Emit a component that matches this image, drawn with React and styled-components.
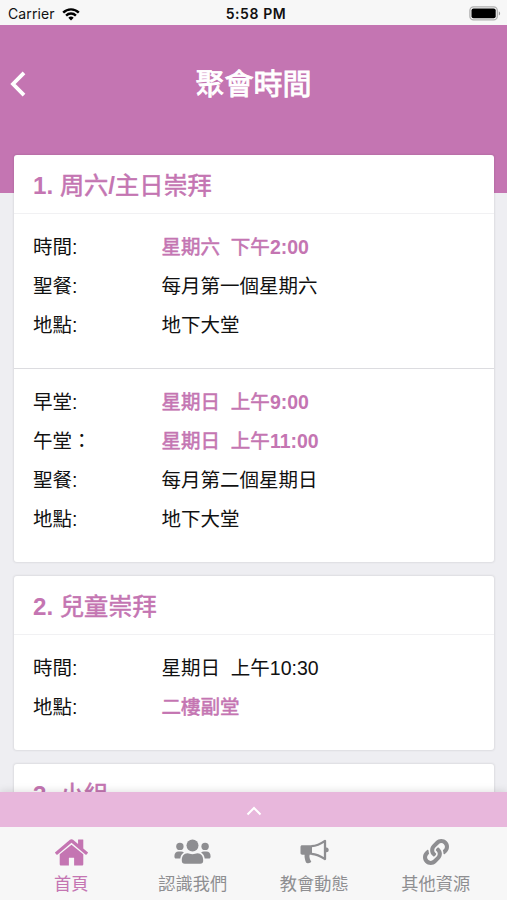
import styled, { createGlobalStyle } from 'styled-components'
import { FaLink } from 'react-icons/fa'

const GlobalStyle = createGlobalStyle`
  * {
    box-sizing: border-box;
  }
  body {
    margin: 0;
    overflow: hidden;
    background-color: #eeeef2;
    font-family: "Liberation Sans", "Noto Sans CJK TC", sans-serif;
  }
`

const Screen = styled.div`
  display: flex;
  flex-direction: column;
  height: 900px;
  overflow: hidden;
  background-color: #eeeef2;
`

const StatusBar = styled.div`
  display: grid;
  grid-template-columns: 1fr auto 1fr;
  align-items: center;
  flex-shrink: 0;
  height: 25px;
  padding: 3px 6px 0 8px;
  background-color: #f7f7f7;
  color: #111;
  font-family: Inter, "Liberation Sans", sans-serif;
  font-size: 14px;
  line-height: 22px;
`

const Carrier = styled.div`
  display: flex;
  align-items: center;
  gap: 7px;
  letter-spacing: 0.1px;
`

const Clock = styled.div`
  padding-left: 3px;
  font-weight: 600;
  letter-spacing: 0.6px;
`

const Battery = styled.svg`
  justify-self: end;
  margin-top: -2px;
`

const Header = styled.header`
  display: grid;
  grid-template-columns: 36px 1fr 36px;
  align-items: center;
  flex-shrink: 0;
  height: 168px;
  padding-bottom: 50px;
  background-color: #c475b2;
  color: #fff;
`

const BackButton = styled.button`
  display: flex;
  padding: 0 0 0 9px;
  border: 0;
  background: none;
  color: inherit;
`

const PageTitle = styled.h1`
  margin: 0;
  padding-top: 2px;
  text-align: center;
  font-size: 29px;
  font-weight: 400;
  line-height: 40px;
  -webkit-text-stroke: 0.9px currentColor;
`

const Content = styled.main`
  display: flex;
  flex-direction: column;
  flex: 1;
  gap: 14px;
  min-height: 0;
  margin-top: -38px;
  padding: 0 13px 0 14px;
`

const Card = styled.section`
  flex-shrink: 0;
  border-radius: 3px;
  background-color: #fff;
  box-shadow: 0 0 2px 1px rgba(0, 0, 0, 0.07);
`

const CardTitle = styled.h2`
  height: 59px;
  margin: 0;
  padding: 0 19px;
  border-bottom: 1px solid #f1f1f3;
  color: #c475b2;
  font-size: 24.2px;
  font-weight: 400;
  line-height: 62px;
`

const Group = styled.dl`
  margin: 0;
  padding: 14px 19px 23px;
  & + & {
    border-top: 1px solid #dcdce0;
  }
`

const Row = styled.div`
  display: grid;
  grid-template-columns: 128.5px 1fr;
  height: 39px;
  font-size: 19.5px;
  line-height: 39px;
  white-space: pre;
`

const Label = styled.dt`
  color: #111;
`

const Value = styled.dd`
  margin: 0;
  color: ${(props) => (props.$accent ? '#c475b2' : '#111')};
`

// the CJK face has no semibold, so a thin stroke thickens the regular one
const Semibold = styled.span`
  -webkit-text-stroke: 0.55px currentColor;
`

const Latin = styled.b`
  font-weight: 700;
`

const Drawer = styled.div`
  display: flex;
  align-items: center;
  justify-content: center;
  flex-shrink: 0;
  height: 35px;
  z-index: 1;
  padding-top: 2px;
  background-color: #e8b7dc;
  box-shadow: 0 -1px 8px rgba(0, 0, 0, 0.12);
`

const TabBar = styled.nav`
  display: grid;
  grid-template-columns: repeat(4, 121.5px);
  justify-content: center;
  flex-shrink: 0;
  height: 73px;
  padding: 10px 0 0;
  z-index: 1;
  background-color: #f7f7f7;
`

const Tab = styled.a`
  display: flex;
  flex-direction: column;
  align-items: center;
  color: ${(props) => (props.$active ? '#c475b2' : '#8e8e91')};
  font-size: 17.2px;
  line-height: 26px;
`

const TabIcon = styled.span`
  display: flex;
  align-items: center;
  justify-content: center;
  height: 30px;
  margin-bottom: 4px;
`

const cards = [
  {
    title: '1. 周六/主日崇拜',
    groups: [
      [
        { label: '時間:', value: '星期六  下午2:00', accent: true },
        { label: '聖餐:', value: '每月第一個星期六' },
        { label: '地點:', value: '地下大堂' },
      ],
      [
        { label: '早堂:', value: '星期日  上午9:00', accent: true },
        { label: '午堂：', value: '星期日  上午11:00', accent: true },
        { label: '聖餐:', value: '每月第二個星期日' },
        { label: '地點:', value: '地下大堂' },
      ],
    ],
  },
  {
    title: '2. 兒童崇拜',
    groups: [
      [
        { label: '時間:', value: '星期日  上午10:30' },
        { label: '地點:', value: '二樓副堂', accent: true },
      ],
    ],
  },
  { title: '3. 小組', groups: [] },
]

function HomeIcon() {
  return (
    <svg width="33" height="27" viewBox="90 250 1612 1292" fill="currentColor">
      <path d="M1472 992v480q0 26-19 45t-45 19h-384v-384h-256v384h-384q-26 0-45-19t-19-45v-480q0-1 .5-3t.5-3l575-474 575 474q1 2 1 6zm223-69l-62 74q-8 9-21 11h-3q-13 0-21-7l-692-577-692 577q-12 8-24 7-13-2-21-11l-62-74q-8-10-7-23.5t11-21.5l719-599q32-26 76-26t76 26l244 204v-195q0-14 9-23t23-9h192q14 0 23 9t9 23v408l219 182q10 8 11 21.5t-7 23.5z" />
    </svg>
  )
}

function PeopleIcon() {
  return (
    <svg width="37" height="26" viewBox="0 0 37 26" fill="currentColor">
      <circle cx="18.5" cy="6.5" r="6" />
      <circle cx="5.9" cy="7.4" r="3.7" />
      <circle cx="31.1" cy="7.4" r="3.7" />
      <path d="M.4 17.2c0-2.800 1.600-4.600 4.200-4.600h2.500c1.100 0 2.100.4 2.800 1-2.200 1.400-3.300 3.400-3.600 6H2c-1 0-1.600-.7-1.600-2.400z" />
      <path d="M36.6 17.200c0-2.800-1.600-4.600-4.200-4.600h-2.500c-1.100 0-2.100.4-2.800 1 2.200 1.400 3.300 3.400 3.600 6H35c1 0 1.600-.7 1.600-2.400z" />
      <path d="M7.800 21.500c0-4.400 2-7.300 5.700-7.300 1.700 0 2.700 1 5 1s3.300-1 5-1c3.700 0 5.700 2.900 5.700 7.300 0 2.200-1 3.300-3 3.300H10.800c-2 0-3-1.100-3-3.300z" />
    </svg>
  )
}

function BullhornIcon() {
  return (
    <svg width="29" height="26" viewBox="0 0 29 26" fill="currentColor">
      <path d="M2.200 6.200H12v9.600H9.600c-.5 2.600.2 4.600 1.700 6.800-.8 2-4.400 2.300-5.400.7-.8-2.500-1.600-5-1.300-7.500H2.200c-1 0-1.700-.7-1.700-1.700V7.900c0-1 .7-1.700 1.700-1.700z" />
      <path d="M11.500 7.200C16.500 6.900 20.500 5 25 1.900v18.200c-4.500-3.100-8.500-5-13.500-5.300" fill="none" stroke="currentColor" strokeWidth="2.300" strokeLinejoin="round" />
      <path d="M25.500 8.600h1c1.300 0 2.200 1 2.200 2.300s-.9 2.300-2.200 2.300h-1z" />
    </svg>
  )
}

const tabs = [
  { label: '首頁', icon: <HomeIcon />, active: true },
  { label: '認識我們', icon: <PeopleIcon /> },
  { label: '教會動態', icon: <BullhornIcon /> },
  { label: '其他資源', icon: <FaLink size={26} /> },
]

function Strong({ text }) {
  return text
    .split(/([\x20-\x7e]+)/)
    .filter(Boolean)
    .map((part, i) =>
      /^[\x20-\x7e]/.test(part) ? <Latin key={i}>{part}</Latin> : <Semibold key={i}>{part}</Semibold>
    )
}

function Wifi() {
  return (
    <svg width="18" height="13" viewBox="0 0 18 13" fill="none" stroke="#000" strokeWidth="2.4">
      <path d="M1.2 4.6a11 11 0 0 1 15.6 0" />
      <path d="M4.1 7.6a6.9 6.9 0 0 1 9.8 0" />
      <path d="M9 12.6 6.3 9.8a3.9 3.9 0 0 1 5.4 0z" fill="#000" stroke="none" />
    </svg>
  )
}

function App() {
  return (
    <Screen>
      <GlobalStyle />
      <StatusBar>
        <Carrier>
          Carrier
          <Wifi />
        </Carrier>
        <Clock>5:58 PM</Clock>
        <Battery width="32" height="15" viewBox="0 0 32 15">
          <rect x="0.9" y="0.9" width="27.4" height="13" rx="3.6" fill="#f7f7f7" stroke="#b0b0b0" strokeWidth="1.3" />
          <rect x="2.5" y="2.5" width="24.2" height="9.8" rx="2" fill="#000" />
          <path d="M29.800 5.200c1.800.7 1.800 3.700 0 4.400z" fill="#999" />
        </Battery>
      </StatusBar>
      <Header>
        <BackButton aria-label="返回">
          <svg width="18" height="26" viewBox="0 0 18 26" fill="none" stroke="#fff" strokeWidth="3.8">
            <path d="M15 1.800 4 13l11 11.200" />
          </svg>
        </BackButton>
        <PageTitle>聚會時間</PageTitle>
      </Header>
      <Content>
        {cards.map((card) => (
          <Card key={card.title}>
            <CardTitle>
              <Strong text={card.title} />
            </CardTitle>
            {card.groups.map((rows, i) => (
              <Group key={i}>
                {rows.map((row) => (
                  <Row key={row.label}>
                    <Label>{row.label}</Label>
                    <Value $accent={row.accent}>{row.accent ? <Strong text={row.value} /> : row.value}</Value>
                  </Row>
                ))}
              </Group>
            ))}
          </Card>
        ))}
      </Content>
      <Drawer>
        <svg width="16" height="10" viewBox="0 0 16 10" fill="none" stroke="#fff" strokeWidth="2">
          <path d="M1.500 8.500 8 2l6.500 6.500" />
        </svg>
      </Drawer>
      <TabBar>
        {tabs.map(({ label, icon, active }) => (
          <Tab key={label} $active={active}>
            <TabIcon>{icon}</TabIcon>
            {label}
          </Tab>
        ))}
      </TabBar>
    </Screen>
  )
}

export default App
